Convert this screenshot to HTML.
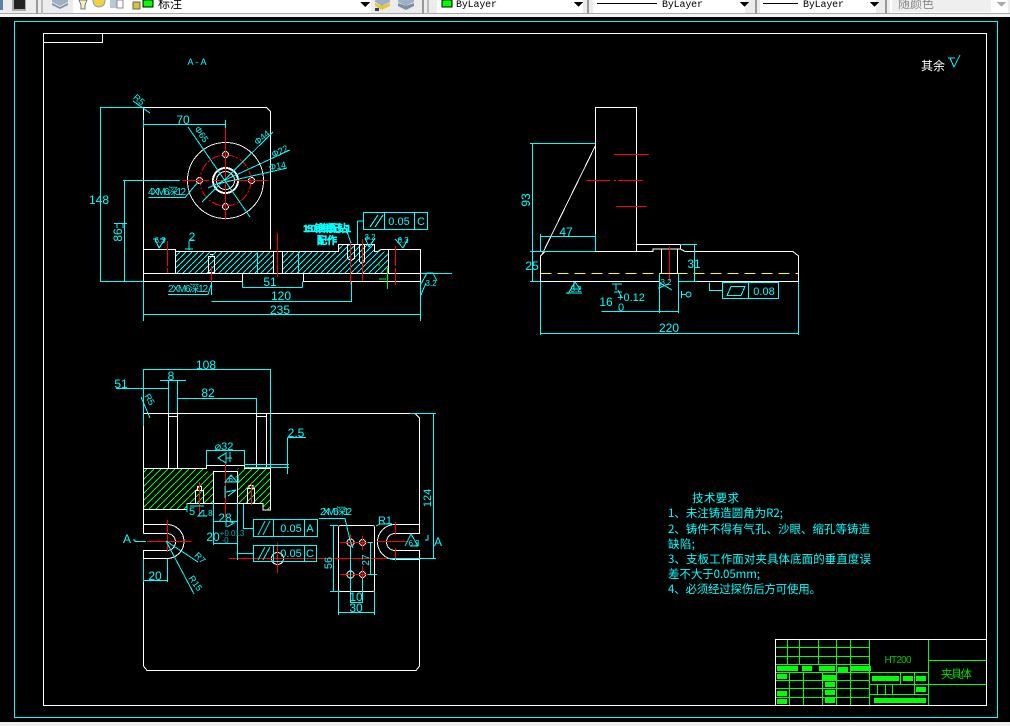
<!DOCTYPE html>
<html lang="zh">
<head>
<meta charset="utf-8">
<title>CAD</title>
<style>
html,body{margin:0;padding:0;background:#000;width:1010px;height:726px;overflow:hidden}
svg{display:block;position:absolute;left:0;top:0}
.w path,.w rect,.w circle{stroke:#fff;fill:none;stroke-width:1}
.c path,.c rect,.c circle{stroke:#0ff;fill:none;stroke-width:1}
.r path,.r circle{stroke:#f00;fill:none;stroke-width:1}
.g path{stroke:#0f0;fill:none;stroke-width:1}
.gf rect{fill:#0f0}
text{font-family:"Liberation Sans","WenQuanYi Zen Hei",sans-serif;fill:#0ff;font-size:11px;text-anchor:middle}
.s{font-size:9px}
.x{font-size:8px}
.l{text-anchor:start}
.b{font-weight:bold;stroke:#0ff;stroke-width:.4}
.cn{font-family:"WenQuanYi Zen Hei","Noto Sans CJK SC",sans-serif;font-size:11.5px;text-anchor:start}
.tb{font-family:"Liberation Mono",monospace;font-size:10px;fill:#000;text-anchor:start}
</style>
</head>
<body>
<svg width="1010" height="726" viewBox="0 0 1010 726" shape-rendering="crispEdges">
<defs>
<pattern id="hc" width="6" height="6" patternUnits="userSpaceOnUse"><path d="M0 6L6 0" stroke="#0ff" stroke-width="1" fill="none"/></pattern>
<pattern id="hg" width="7" height="7" patternUnits="userSpaceOnUse"><path d="M0 7L7 0" stroke="#0f0" stroke-width="1" fill="none"/></pattern>
</defs>
<rect width="1010" height="726" fill="#000"/>

<!-- toolbar -->
<rect width="1010" height="17" fill="#ececec"/>
<rect y="13" width="1010" height="1" fill="#a8a8a8"/>
<rect y="14" width="1010" height="3" fill="#f4f4f4"/>
<rect x="0" y="0" width="3" height="10" fill="#5a7fa8"/>
<rect x="12" y="0" width="14" height="11" fill="#aaa"/>
<rect x="14" y="0" width="11" height="9" fill="#222"/>
<rect x="36" y="0" width="2" height="14" fill="#999"/><rect x="41" y="0" width="2" height="14" fill="#bbb"/>
<path d="M52 0H68V2L60 6L52 2Z" fill="#9fb0c4"/><path d="M52 3L60 7L68 3V5L60 9L52 5Z" fill="#7c90a8"/>
<rect x="73" y="0" width="298" height="13" fill="#fff"/>
<path d="M79 0H87L85 5V9H81V5Z" fill="#f4f0c0" stroke="#777"/>
<circle cx="99" cy="1" r="6" fill="#f5cf40" stroke="#7aa0c8"/>
<rect x="110" y="0" width="7" height="8" fill="#b8c8d8"/><rect x="117" y="0" width="6" height="8" fill="#fff" stroke="#889"/>
<rect x="133" y="2" width="7" height="7" fill="#d8c040" stroke="#665"/>
<rect x="143" y="0" width="10" height="7" fill="#0f0" stroke="#000"/>
<text class="cn" x="158" y="8" style="fill:#000;font-size:12px">标注</text>
<path d="M360 2H370L365 7Z" fill="#000"/>
<path d="M375 0H390V2L382 6L375 2Z" fill="#9fb0c4"/><path d="M375 3L382 6L390 3V6L382 10L375 6Z" fill="#e8c830"/><path d="M375 8H379V11H375Z" fill="#246"/>
<path d="M398 0H414V2L406 6L398 2Z" fill="#9fb0c4"/><path d="M398 3L406 6L414 3V6L406 10L398 6Z" fill="#7c90a8"/>
<rect x="422" y="0" width="2" height="14" fill="#999"/><rect x="427" y="0" width="2" height="14" fill="#bbb"/>
<rect x="437" y="0" width="146" height="13" fill="#fff"/>
<rect x="442" y="0" width="10" height="7" fill="#0f0" stroke="#000"/>
<text class="tb" x="456" y="7" textLength="41">ByLayer</text>
<path d="M574 2H583L578.5 7Z" fill="#000"/>
<rect x="587" y="0" width="2" height="14" fill="#999"/>
<rect x="593" y="0" width="152" height="13" fill="#fff"/>
<rect x="597" y="3" width="60" height="1" fill="#000"/>
<text class="tb" x="662" y="7" textLength="41">ByLayer</text>
<path d="M740 2H749L744.500 7Z" fill="#000"/>
<rect x="755" y="0" width="2" height="14" fill="#999"/>
<rect x="760" y="0" width="116" height="13" fill="#fff"/>
<rect x="763" y="3" width="35" height="1" fill="#000"/>
<text class="tb" x="803" y="7" textLength="41">ByLayer</text>
<path d="M870 2H879L874.500 7Z" fill="#000"/>
<rect x="885" y="0" width="2" height="14" fill="#999"/>
<rect x="890" y="0" width="118" height="13" fill="#fff"/>
<rect x="892" y="0" width="99" height="12" fill="#efefef"/>
<text class="cn" x="898" y="8" style="fill:#8a8a8a;font-size:12px">随颜色</text>
<path d="M997 2H1006L1001.500 7Z" fill="#aaa"/>

<!-- bottom strip -->
<rect y="722" width="1010" height="4" fill="#eeeeee"/>

<!-- frames -->
<g class="c"><rect x="14.500" y="21.500" width="983" height="696"/></g>
<g class="w"><rect x="43.500" y="33.500" width="943" height="672"/><rect x="43.500" y="33.500" width="59" height="9"/></g>

<!-- hatches -->
<path d="M175.500 251.500H273V273.500H175.500Z" fill="url(#hc)"/>
<path d="M283 251.500H338V244H374V251.500H388V273.500H283Z" fill="url(#hc)"/>
<path d="M143.500 468.500H206.500V471.500H213V503.500H187V509.500H143.500Z" fill="url(#hg)"/>
<path d="M237.500 468.500H270.500V510H263V503.500H237.500Z" fill="url(#hg)"/>

<!-- white geometry -->
<g class="w">
<path d="M143.500 249.500V107.500H266.500L270.500 111.500V249.500"/>
<path d="M143.500 249.500H175.500V251.500H338.500V244.500H374.500V251.500H378L381 249.500H420.500V281.500H303.500V273.500H242.500V281.500H143.500Z"/>
<path d="M143.500 249.500V281.500M175.500 251.500V273.500M143.500 273.500H420.500M273.500 251.500V273.500M282.500 251.500V273.500M388.500 249.500V273.500"/>
<rect x="208.500" y="256.500" width="6" height="16"/><path d="M210 254.500H213"/>
<path d="M347.500 244.500V258.500L351 260.500L354.500 258.500V244.500M359.500 244.500V261.500L362 263.500L364.500 261.500V244.500"/>
<circle cx="225.500" cy="180.500" r="38"/>
<circle cx="225.500" cy="180.500" r="13"/><circle cx="225.500" cy="180.500" r="12"/><circle cx="225.500" cy="180.500" r="9"/>
<circle cx="225.500" cy="154.500" r="3"/><circle cx="225.500" cy="206.500" r="3"/><circle cx="199.500" cy="180.500" r="3"/><circle cx="251.500" cy="180.500" r="3"/>

<path d="M595.500 251.500V107.500H636.500V251.500M595.500 145.500L541.500 255.500"/>
<path d="M540.500 281.500V256L545 251.500H653V249H680.500V244.500H636.500M680.500 244.500V249L685 251.500H793L798.500 256V281.500H678.500V273.500H659.500V281.500H540.500"/>
<path d="M661.500 249V273.500M677.500 249V273.500"/>

<path d="M143.500 533.500V417V413.500H415L419.500 418V533.500H395A8.500 8.500 0 0 0 395 550.500H419.500V666L416 670.500H147L143.500 666V550.500H167A8.500 8.500 0 0 0 167 533.500H143.500"/>
<path d="M143.500 524.500H167A17 17 0 0 1 167 558.500H143.500M419.500 524.500H395A17 17 0 0 0 395 559.500H419.500M143.500 468.500V509.500H187V503.500H263V510H270.500V468.500H244.500V465.500H206.500V468.500H143.500"/>
<path d="M168.500 413.500V468.500M177.500 413.500V468.500M168.500 416.500H177.500M256.500 413.500V468.500M266.500 413.500V468.500M256.500 416.500H266.500"/>
<rect x="213.500" y="471.500" width="24" height="32"/>
<rect x="195.500" y="490.500" width="8" height="13"/><path d="M197.500 490.500V486.500H201.500V490.500"/>
<rect x="247.500" y="488.500" width="7" height="15"/><path d="M249 488.500V485.500H253V488.500"/>
<circle cx="277.500" cy="558.500" r="6"/>
<rect x="338.500" y="525.500" width="36" height="66" rx="2"/>
<circle cx="350.500" cy="542.500" r="3.500"/><circle cx="362.500" cy="542.500" r="3"/><circle cx="350.500" cy="574.500" r="3.500"/><circle cx="362.500" cy="574.500" r="3"/>
</g>

<!-- red centre lines -->
<g class="r">
<path d="M182 180.500H209M213 180.500H268M225.500 128V220"/>
<circle cx="225.500" cy="180.500" r="25.500" stroke-dasharray="9 2 2 2"/>
<path d="M167.500 241V266M167.500 268V273M277.500 233V277M395.500 246V266M395.500 268V285M211.500 266V289M350.500 242V285M362.500 239V281"/>
<path d="M614 154.500H649M586 180.500H610M614 180.500H616M618 180.500H643M616 206.500H647M669.500 247V281"/>
<path d="M199.500 482V515M251.500 482V505M225.500 462V518M147 541.500H191.500M167.500 520V552M229 558.500H387M277.500 543V573"/>
<path d="M377 541.500H407M395.500 522V535M395.500 548V561M340 542.500H360M350.500 534V556M354 542.500H370M362.500 536V550M340 574.500H360M350.500 565V583M354 574.500H370M362.500 566V583"/>
</g>

<!-- green / yellow -->
<g class="g"><path d="M387.500 268V289M379 263V266M379 279H386"/></g>
<path d="M540.500 273.500H798.500" stroke="#ff0" stroke-dasharray="11 6" fill="none"/>

<!-- cyan dimensions top-left -->
<g class="c">
<path d="M100.500 107.500V281.500M100 107.500H143M100 281.500H143M124.500 180.500V281.500M123 180.500H180M123 281.500H143"/>
<path d="M114 223.500H127M117 223.500V228M123 223.500V228"/>
<path d="M143.500 124.500H225.500M143.500 120V128M225.500 120V128"/>
<path d="M133 101L150 113M188 127L250 217M202 202L273 132M208 188L290 150M217 184L287 168M148.500 197.500H185L198 182"/>
<path d="M143.500 281.500V321M420.500 281.500V321M143.500 314.500H420.500"/>
<path d="M211.500 282V295M351.500 282V302M211.500 301.500H351.500M168 294.500H208L211 285"/>
<path d="M242.500 281.500V287.500M302.500 281.500V287.500M242.500 287.500H302.500"/>
<path d="M257.500 251V273M298.500 251V273"/>
<path d="M155 239L159 248L165 239M153 239H158M160 239H166"/>
<path d="M189 241V250M189 240H194M185 249H193"/>
<path d="M395 239L403 248L408 239M398 239H402"/>
<path d="M365 238L369 247L375 238M365 238H370"/>
<path d="M305.500 231.500H347L351 243M357.500 221V244M357.500 221H364"/>
<rect x="363.500" y="212.500" width="64" height="17"/><path d="M384.500 212.500V229.500M414.500 212.500V229.500M370 227L378 215M375 227L383 215"/>
<path d="M420.500 273.500H452M420.500 285L427 273H433L437 281M420.500 296L426 283"/>
</g>
<text x="99" y="204" font-size="12" style="font-size:12px">148</text>
<text transform="translate(122 235) rotate(-90)" style="font-size:12px">86</text>
<text x="183" y="124" style="font-size:12px">70</text>
<text transform="translate(137 102) rotate(40)" class="s">R5</text>
<text transform="translate(199 136) rotate(55)" class="s">Φ65</text>
<text transform="translate(264 140) rotate(-40)" class="s">Φ44</text>
<text transform="translate(281 154) rotate(-25)" class="s">Φ22</text>
<text transform="translate(278 169) rotate(-10)" class="s">Φ14</text>
<text x="167" y="195" class="s" textLength="38" style="font-size:10px">4XM6深12</text>
<text x="192" y="241" style="font-size:12px">2</text>
<text x="188" y="292" class="s" textLength="40" style="font-size:10px">2XM6深12</text>
<text x="270" y="286" style="font-size:12px">51</text>
<text x="281" y="300" style="font-size:12px">120</text>
<text x="280" y="314" style="font-size:12px">235</text>
<text x="327" y="232" class="s b" textLength="48" style="font-size:10px">1:50 锥销配钻1</text>
<text x="327" y="244" class="s b" style="font-size:10px">配作</text>
<text x="399" y="225" style="font-size:11px">0.05</text>
<text x="421" y="225" style="font-size:11px">C</text>
<text x="431" y="286" class="x">3.2</text>
<text x="160" y="243" class="x">6.3</text>
<text x="403" y="243" class="x">6.3</text>
<text x="370" y="240" class="x">3.2</text>

<!-- right view dims -->
<g class="c">
<path d="M532.500 143.500V281.500M530 143.500H595M530 251.500H595M530 281.500H540"/>
<path d="M540.500 236.500H595.500M540.500 234V251M595.500 234V251"/>
<path d="M694.500 244.500V281.500M680 244.500H697M678 281.500H697"/>
<path d="M540.500 281.500V335M798.500 281.500V335M540.500 333.500H798.500"/>
<path d="M659.500 273.500V313M678.500 273.500V313M601.500 311.500H678.500"/>
<rect x="722.500" y="282.500" width="56" height="16"/><path d="M748.500 282.500V298.500M709.500 282.500V290.500H722.500M727 295.500H741L745 286.500H731Z"/>
<path d="M574 282V288M568 294L575 282L580 289H571M566 293H582"/>
<path d="M616 284V290M612 284H622M618 290L622 298M614 292H622"/>
<path d="M661 282L659 288L668 284M660 283L672 290"/>
<path d="M681.500 291V298M681.500 294.500H686"/>
<circle cx="688.500" cy="294.500" r="2.500"/>
</g>
<text transform="translate(530 200) rotate(-90)" style="font-size:12px">93</text>
<text x="532" y="270" style="font-size:12px">25</text>
<text x="566" y="236" style="font-size:12px">47</text>
<text x="694" y="268" style="font-size:12px">31</text>
<text x="606" y="306" style="font-size:12px">16</text>
<text x="631" y="301" style="font-size:11px">+0.12</text>
<text x="621" y="311" style="font-size:11px">0</text>
<text x="669" y="332" style="font-size:12px">220</text>
<text x="764" y="295" style="font-size:11px">0.08</text>
<text x="576" y="292" class="x">3.2</text>
<text x="666" y="285" class="x">3.2</text>

<!-- lower view dims -->
<g class="c">
<path d="M143.500 369.500H270.500M143.500 369V426M270.500 369V468M160 380.500H186M168.500 380V413M177.500 380V413M177.500 398.500H256.500M177.500 398V413M256.500 398V413M116 388.500H168"/>
<path d="M141 397L150 418"/>
<path d="M287.500 437.500H306M287.500 437.500V474M244 464.500H289M244 467.500H289"/>
<path d="M206.500 450.500H244.500M206.500 450V465M244.500 450V465M218 458L226 453V463ZM226 458H232M230 452V462"/>
<path d="M225 482L231 475L237 482ZM226 492L236 490L228 496M225 486V498"/>
<path d="M213.500 503V545M237.500 503V560M213.500 521.500H237.500M213.500 543.500H237.500"/>
<path d="M227 521L234 523L227 527M226 521V527"/>
<path d="M187 503V512M203 510L198 516H207M190 506H204"/>
<rect x="253.500" y="519.500" width="64" height="17"/><path d="M273.500 519.500V536.500M304.500 519.500V536.500M258 535L265 521M263 535L270 521M243.500 504V528.500H253.500"/>
<rect x="253.500" y="545.500" width="63" height="16"/><path d="M273.500 545.500V561.500M304.500 545.500V561.500M258 560L265 547M263 560L270 547M237.500 553.500H253.500"/>
<path d="M166 541L198 562M166 541L194 594"/>
<path d="M133 540H135V541.500H146"/>
<path d="M143.500 580.500H167.500M143.500 559V582M167.500 559V582"/>
<path d="M333.500 525.500V591.500M330 525.500H338M330 591.500H338"/>
<path d="M370.500 542.500V574.500M368 542.500H373M368 574.500H377"/>
<path d="M350.500 546V603M362.500 578V603M350.500 602.500H362.500M338.500 591V615M374.500 591V615M338.500 612.500H374.500"/>
<path d="M319 518.500H345L350 540L353 548"/>
<path d="M376 526L380 524H392"/>
<path d="M410 413.500H436M433.500 413.500V558.500M387 558.500H436"/>
<path d="M425 540H428V535M405 546L411 534L418 546H410"/>
</g>
<text x="206" y="370" style="font-size:12px" dy="-1">108</text>
<text x="171" y="381" style="font-size:12px" dy="-1">8</text>
<text x="208" y="398" style="font-size:12px" dy="-1">82</text>
<text x="121" y="388" style="font-size:12px">51</text>
<text transform="translate(147 401) rotate(60)" class="s">R5</text>
<text x="296" y="437" style="font-size:12px">2.5</text>
<text x="224" y="450" style="font-size:11px">⌀32</text>
<text x="234" y="482" class="x">6.3</text>
<text x="192" y="515" class="s" style="font-size:11px">5</text>
<text x="207" y="516" class="x">1.8</text>
<text x="225" y="522" style="font-size:12px">28</text>
<text x="213" y="541" style="font-size:12px">20</text>
<text x="232" y="536" class="x" style="fill:#0aa">+0.013</text>
<text x="225" y="543" class="x" style="fill:#0aa">-0</text>
<text x="291" y="532" style="font-size:11px">0.05</text>
<text x="310" y="532" style="font-size:11px">A</text>
<text x="291" y="557" style="font-size:11px">0.05</text>
<text x="310" y="557" style="font-size:11px">C</text>
<text x="127" y="543" style="font-size:12px">A</text>
<text x="438" y="546" style="font-size:12px">A</text>
<text transform="translate(198 560) rotate(45)" class="s">R7</text>
<text transform="translate(193 585) rotate(55)" class="s">R15</text>
<text x="155" y="580" style="font-size:12px">20</text>
<text transform="translate(332 563) rotate(-90)" style="font-size:11px">56</text>
<text transform="translate(369 560) rotate(-90)" style="font-size:10px">27</text>
<text x="356" y="601" style="font-size:12px">10</text>
<text x="356" y="612" style="font-size:12px">30</text>
<text x="336" y="515" textLength="32" style="font-size:10px">2XM6深12</text>
<text x="385" y="524" style="font-size:11px">R1</text>
<text transform="translate(431 498) rotate(-90)" style="font-size:11px">124</text>
<text x="414" y="546" class="x">6.3</text>

<!-- annotations -->
<text x="197" y="65" class="s" textLength="19">A-A</text>
<text class="cn" x="921" y="70" style="fill:#fff;font-size:12px">其余</text>
<g class="c"><path d="M950 58L954 67L960 55M948 58H955"/></g>

<!-- tech requirements -->
<text class="cn" x="692" y="502" textLength="47">技术要求</text>
<text class="cn" x="668" y="517" textLength="115">1、未注铸造圆角为R2;</text>
<text class="cn" x="668" y="533" textLength="202">2、铸件不得有气孔、沙眼、缩孔等铸造</text>
<text class="cn" x="668" y="548" textLength="27">缺陷;</text>
<text class="cn" x="668" y="563" textLength="203">3、支板工作面对夹具体底面的垂直度误</text>
<text class="cn" x="668" y="578" textLength="92">差不大于0.05mm;</text>
<text class="cn" x="668" y="593" textLength="153">4、必须经过探伤后方可使用。</text>

<!-- title block -->
<g class="g">
<path d="M787.500 639.500V664M799.500 639.500V664M818.500 639.500V664M836.500 639.500V705M850.500 639.500V705M869.500 639.500V705M928.500 639.500V705"/>
<path d="M775 647.500H869M775 656.500H869M775 664.500H869M775 672.500H928M775 680.500H869M775 688.500H869M775 697.500H869"/>
<path d="M789.500 672V705M803.500 672V705M822.500 672V705M928 660.500H986M869 684.500H928M928 684.500H986M869 694.500H928"/>
<path d="M900.500 672V684M914.500 672V694M877.500 684V694M885.500 684V694M892.500 684V694"/>
</g>
<g class="w"><path d="M775.500 705V639.500H986"/></g>
<g class="gf">
<rect x="777" y="666" width="21" height="5"/><rect x="802" y="666" width="10" height="5"/><rect x="819" y="666" width="16" height="5"/><rect x="838" y="667" width="10" height="5"/><rect x="851" y="666" width="20" height="5"/>
<rect x="777" y="674" width="10" height="5"/><rect x="823" y="675" width="13" height="5"/><rect x="825" y="682" width="10" height="5"/><rect x="825" y="690" width="10" height="5"/><rect x="777" y="691" width="10" height="5"/><rect x="825" y="698" width="10" height="5"/><rect x="777" y="699" width="10" height="5"/>
<rect x="872" y="676" width="27" height="5"/><rect x="903" y="676" width="10" height="5"/><rect x="916" y="676" width="10" height="5"/><rect x="916" y="687" width="10" height="5"/><rect x="874" y="698" width="52" height="5"/>
</g>
<text x="898" y="663" textLength="27" style="fill:#0c0;font-size:10px">HT200</text>
<text class="cn" x="941" y="678" textLength="31" style="fill:#0d0">夹具体</text>
</svg>
</body>
</html>
